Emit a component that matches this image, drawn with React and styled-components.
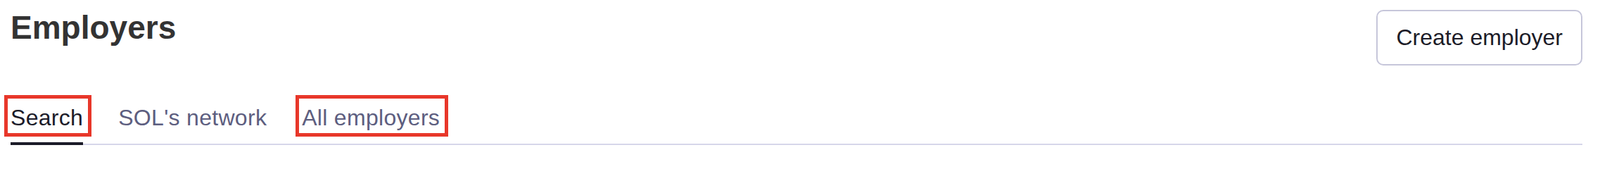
import React from 'react'
import styled, { createGlobalStyle } from 'styled-components';

const GlobalStyle = createGlobalStyle`
    body {
        margin: 0;
        background: #ffffff;
        font-family: "Liberation Sans", Arial, sans-serif;
    }
`;

const Page = styled.div`
    padding: 12px 25px 0 15px;
`;

const Header = styled.div`
    display: flex;
    justify-content: space-between;
    align-items: flex-start;
`;

const Title = styled.h1`
    margin: 0;
    font-size: 46px;
    line-height: 55px;
    font-weight: 700;
    color: #333333;
`;

const Button = styled.button`
    margin-top: 2px;
    height: 79px;
    padding: 0 26px;
    display: flex;
    align-items: center;
    background: #ffffff;
    border: 2px solid #c6c6da;
    border-radius: 10px;
    font-family: inherit;
    font-size: 32px;
    color: #1c1c28;
    cursor: pointer;
`;

const TabList = styled.div`
    display: flex;
    gap: 50px;
    margin-top: 55px;
    border-bottom: 2px solid #d6d6ea;
`;

const Tab = styled.div`
    position: relative;
    margin-bottom: -2px;
    padding-bottom: 16px;
    font-size: 32px;
    line-height: 38px;
    letter-spacing: 0.3px;
    color: ${props => props.active ? '#1b1b29' : '#5d5e7f'};
    border-bottom: 4px solid ${props => props.active ? '#1b1b29' : 'transparent'};
    cursor: pointer;

    /* red annotation frame */
    ${props => props.marked && `
        &::before {
            content: '';
            position: absolute;
            top: -13px;
            bottom: 8px;
            left: -9px;
            right: -12px;
            border: 5px solid #e8372a;
        }
    `}
`;

export default function App() {
    const tabs = [
        { label: 'Search', active: true, marked: true },
        { label: "SOL's network" },
        { label: 'All employers', marked: true },
    ];

    return (
        <Page>
            <GlobalStyle />
            <Header>
                <Title>Employers</Title>
                <Button>Create employer</Button>
            </Header>
            <TabList>
                {tabs.map(tab => (
                    <Tab key={tab.label} active={tab.active} marked={tab.marked}>
                        {tab.label}
                    </Tab>
                ))}
            </TabList>
        </Page>
    )
}
